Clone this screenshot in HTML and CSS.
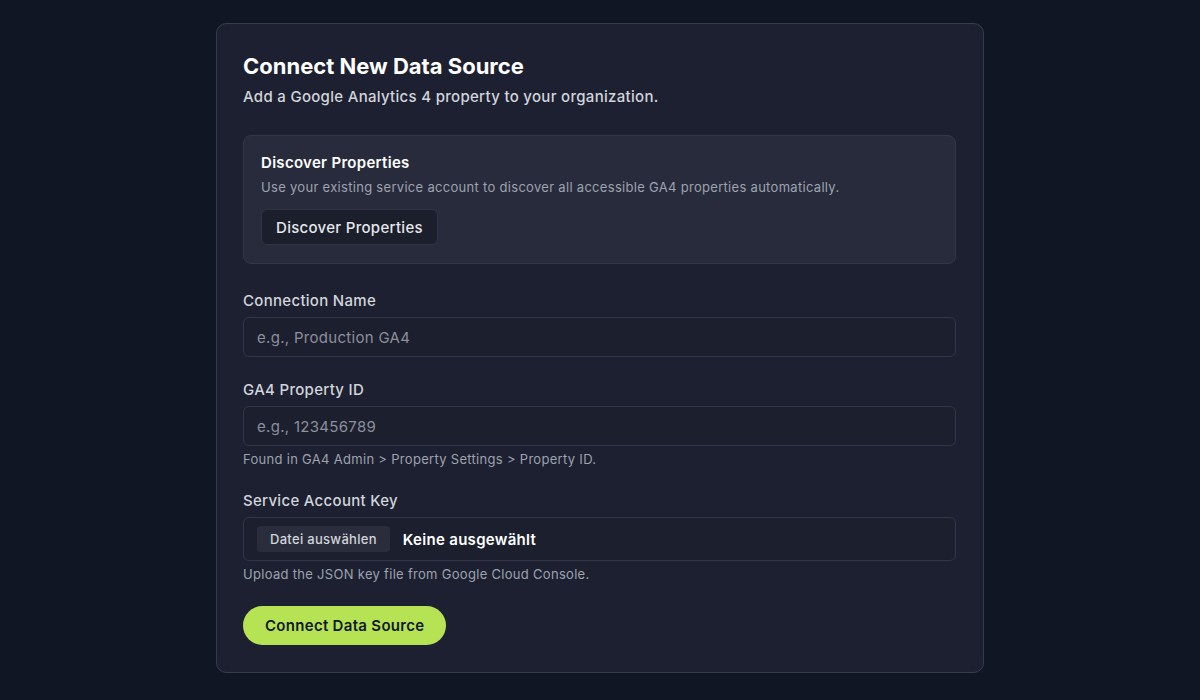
FILE: index.html
```html
<!DOCTYPE html>
<html lang="en">

<head>
    <meta charset="UTF-8">
    <meta name="viewport" content="width=device-width, initial-scale=1.0">
    <title>Connect New Data Source</title>
    <link rel="stylesheet" href="styles.css">
</head>

<body>
    <div class="card">
        <h1>Connect New Data Source</h1>
        <p class="subtitle">Add a Google Analytics 4 property to your organization.</p>

        <div class="discover">
            <h3>Discover Properties</h3>
            <p>Use your existing service account to discover all accessible GA4 properties automatically.</p>
            <button class="ghost-button" type="button">Discover Properties</button>
        </div>

        <form class="fields">
            <div class="field">
                <label for="name">Connection Name</label>
                <input id="name" type="text" placeholder="e.g., Production GA4">
            </div>

            <div class="field">
                <label for="property">GA4 Property ID</label>
                <input id="property" type="text" placeholder="e.g., 123456789">
                <span class="hint">Found in GA4 Admin &gt; Property Settings &gt; Property ID.</span>
            </div>

            <div class="field">
                <label>Service Account Key</label>
                <div class="file-box">
                    <span class="file-button">Datei auswählen</span>
                    <span class="file-name">Keine ausgewählt</span>
                </div>
                <span class="hint">Upload the JSON key file from Google Cloud Console.</span>
            </div>

            <div>
                <button class="submit-button" type="button">Connect Data Source</button>
            </div>
        </form>
    </div>
</body>

</html>
```

FILE: styles.css
```css
* {
    margin: 0;
    padding: 0;
    box-sizing: border-box;
}

body {
    font-family: Inter, 'Noto Sans', sans-serif;
    letter-spacing: 0.3px;
    background: #111625;
    color: #f3f4f6;
    min-height: 100vh;
    padding: 23px 20px;
}

.card {
    max-width: 768px;
    margin: 0 auto;
    background: #1d2030;
    border: 1px solid #363a49;
    border-radius: 10px;
    padding: 28px 27px 27px 26px;
}

h1 {
    font-size: 22px;
    line-height: 28px;
    font-weight: 700;
    letter-spacing: 0;
    color: #ffffff;
}

.subtitle {
    margin-top: 6px;
    font-size: 15px;
    line-height: 22px;
    font-weight: 500;
    color: #d1d5db;
}

.discover {
    margin-top: 27px;
    background: #282b3b;
    border: 1px solid #323646;
    border-radius: 8px;
    padding: 17px 17px 18px;
}

.discover h3 {
    font-size: 15px;
    line-height: 20px;
    font-weight: 600;
    color: #ffffff;
}

.discover p {
    margin-top: 4px;
    font-size: 13px;
    line-height: 20px;
    color: #9ca3af;
}

.ghost-button {
    margin-top: 12px;
    height: 36px;
    padding: 0 14px;
    background: #1b1e2b;
    border: 1px solid #303444;
    border-radius: 6px;
    color: #e5e7eb;
    font-family: inherit;
    letter-spacing: inherit;
    font-size: 15px;
    font-weight: 500;
    cursor: pointer;
}

.fields {
    margin-top: 27px;
    display: flex;
    flex-direction: column;
    gap: 23px;
}

.field {
    display: flex;
    flex-direction: column;
}

.field label {
    font-size: 15px;
    line-height: 20px;
    font-weight: 500;
    color: #d1d5db;
    margin-bottom: 6px;
}

.field input {
    height: 40px;
    padding: 0 13px;
    background: #1c1f2d;
    border: 1px solid #323646;
    border-radius: 6px;
    color: #f3f4f6;
    font-family: inherit;
    letter-spacing: inherit;
    font-size: 15px;
    outline: none;
}

.field input::placeholder {
    color: #8b909c;
}

.hint {
    margin-top: 4px;
    font-size: 13px;
    line-height: 18px;
    color: #9ca3af;
}

.file-box {
    height: 44px;
    display: flex;
    align-items: center;
    gap: 13px;
    padding: 0 13px;
    background: #1c1f2d;
    border: 1px solid #323646;
    border-radius: 6px;
}

.file-button {
    height: 26px;
    display: flex;
    align-items: center;
    padding: 0 13px;
    background: #2a2d3c;
    border-radius: 4px;
    font-size: 13px;
    font-weight: 500;
    color: #d1d5db;
}

.file-name {
    font-size: 15px;
    font-weight: 600;
    color: #ffffff;
}

.submit-button {
    height: 39px;
    padding: 0 22px;
    background: #b6e354;
    border: none;
    border-radius: 999px;
    color: #111827;
    font-family: inherit;
    letter-spacing: inherit;
    font-size: 15px;
    font-weight: 600;
    cursor: pointer;
}
```
